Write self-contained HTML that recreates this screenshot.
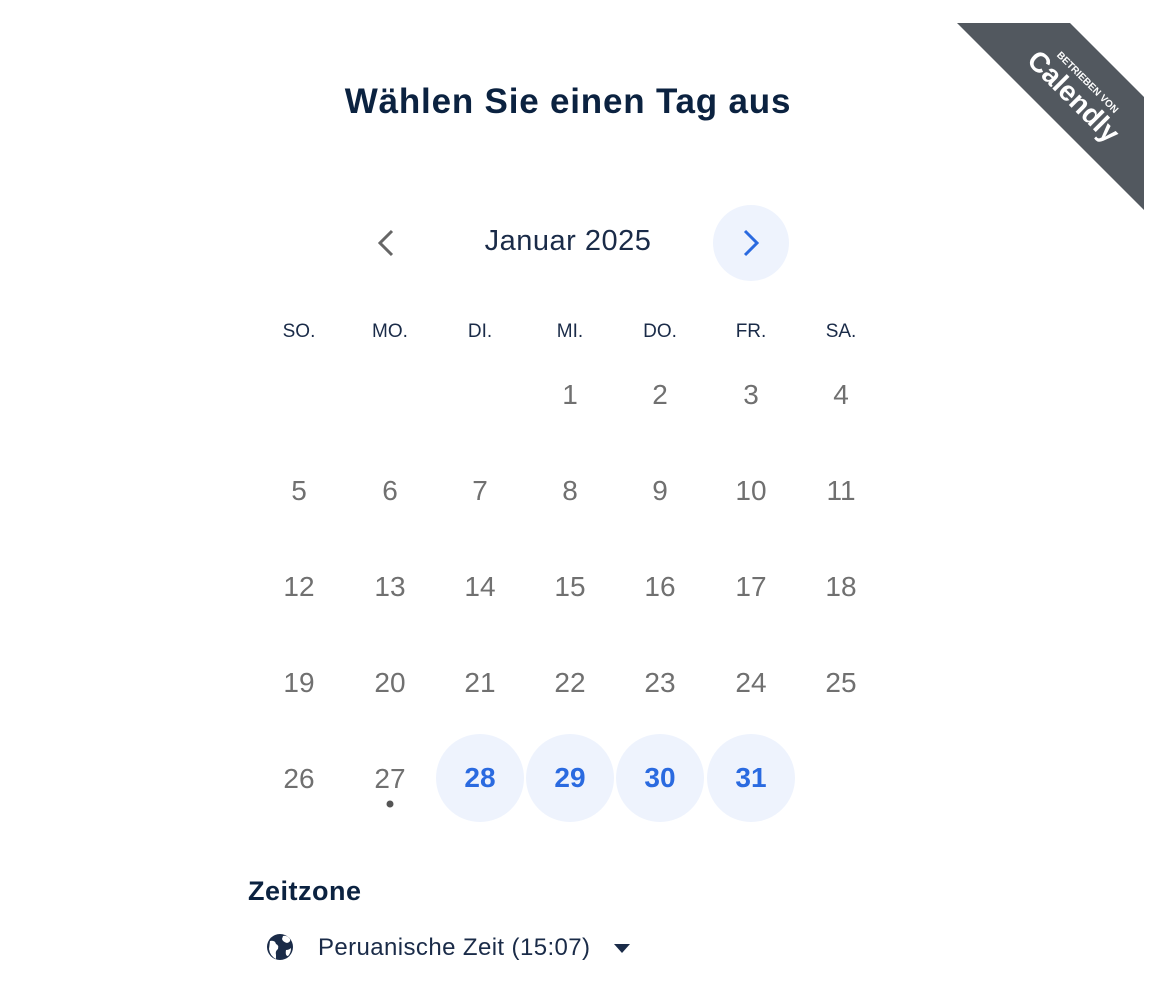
<!DOCTYPE html>
<html><head><meta charset="utf-8"><style>
body{margin:0;width:1154px;height:1006px;background:#fff;font-family:"Liberation Sans",sans-serif;position:relative;overflow:hidden;color:#1a2b48}
.a{position:absolute}
h1{position:absolute;left:0;width:1136px;top:82px;margin:0;text-align:center;font-size:35px;letter-spacing:0.8px;font-weight:bold;color:#0b2240}
.c{position:absolute;width:90px;text-align:center;transform:translateX(-45px)}
.hd{font-size:19px;top:321px;color:#1a2b48}
.d{font-size:28px;color:#707070;line-height:30px}
.av{width:88px;height:88px;border-radius:50%;background:#eef3fd;color:#2a6ae0;font-weight:bold;transform:translate(-44px,-44px);display:flex;align-items:center;justify-content:center;font-size:28px}
</style></head><body>
<svg class="a" style="left:0;top:0" width="1154" height="1006">
<polygon points="957,23 1070,23 1144,97 1144,210" fill="#52585f"/>
<g transform="translate(1074,96) rotate(45)" fill="#fff" font-family="Liberation Sans" font-weight="bold" text-anchor="middle">
<text x="0" y="-16" font-size="10">BETRIEBEN VON</text>
<text x="0" y="10" font-size="28">Calendly</text></g>
<circle cx="751" cy="243" r="38" fill="#eef3fd"/>
<path d="M745 231 L757 243 L745 255" fill="none" stroke="#2a6ae0" stroke-width="3"/>
<path d="M392 231 L380 243 L392 255" fill="none" stroke="#666" stroke-width="3"/>
<circle cx="390" cy="804" r="3.5" fill="#555"/>
<circle cx="280" cy="947" r="13" fill="#1a2b48"/>
<path d="M270 941 q5 -1 6 3 q3 1 2 5 q-3 2 -2 6 l0 4 q-6 -3 -7 -10Z M283 936 q4 -1 7 3 q1 3 -3 4 q-4 -1 -5 -4Z M286 950 q3 0 5 -2 q0 5 -3 8 q-3 0 -2 -6Z" fill="#fff"/>
<path d="M614 944 L630 944 L622 953Z" fill="#1a2b48"/>
</svg>
<h1>Wählen Sie einen Tag aus</h1>
<div class="a" style="left:420px;width:296px;top:225px;text-align:center;font-size:29px;letter-spacing:0.5px;color:#1a2b48">Januar 2025</div>
<div class="c hd" style="left:299px">SO.</div><div class="c hd" style="left:390px">MO.</div><div class="c hd" style="left:480px">DI.</div><div class="c hd" style="left:570px">MI.</div><div class="c hd" style="left:660px">DO.</div><div class="c hd" style="left:751px">FR.</div><div class="c hd" style="left:841px">SA.</div>
<div id="g"></div>
<script>
var xs=[299,390,480,570,660,751,841],h='';
for(var n=1;n<=31;n++){var i=n+2,col=i%7,row=Math.floor(i/7),x=xs[col],y=395+row*96;
if(n>=28)h+='<div class="c av" style="left:'+x+'px;top:'+(y-1)+'px">'+n+'</div>';
else h+='<div class="c d" style="left:'+x+'px;top:'+(y-15)+'px">'+n+'</div>';}
document.getElementById('g').innerHTML=h;
</script>
<div class="a" style="left:248px;top:876px;font-size:27px;letter-spacing:0.5px;font-weight:bold;color:#0b2240">Zeitzone</div>
<div class="a" style="left:318px;top:934px;font-size:24px;letter-spacing:0.4px;color:#1a2b48">Peruanische Zeit (15:07)</div>
</body></html>
